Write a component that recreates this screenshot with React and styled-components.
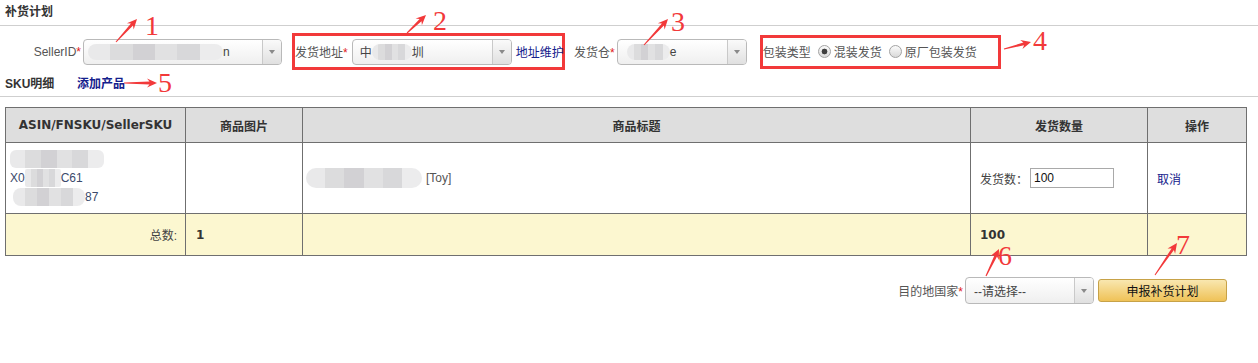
import React from 'react';
import styled, { createGlobalStyle } from 'styled-components';

const Global = createGlobalStyle`
  html, body { margin: 0; padding: 0; background: #fff; }
  body {
    font-family: "Liberation Sans", Arial, "Noto Sans CJK SC", sans-serif;
    font-size: 12px;
    color: #555;
  }
`;

const RED = '#f2393a';
const LINK = '#14208c';

const Page = styled.div`
  position: relative;
  width: 1258px;
  height: 363px;
  overflow: hidden;
`;

const TitleBar = styled.div`
  height: 25px;
  line-height: 25px;
  padding-left: 5px;
  border-bottom: 1px solid #cfcfcf;
  font-weight: bold;
  color: #333;
`;

const FilterRow = styled.div`
  display: flex;
  align-items: center;
  padding: 7px 0 0 29px;
`;

const Label = styled.span`
  display: inline-block;
  white-space: nowrap;
  color: #555;
  margin-right: ${p => p.$mr ?? 3}px;
  ${p => (p.$w ? `width:${p.$w}px; text-align:right;` : '')}
`;

const Star = styled.span`
  color: #e02020;
`;

const SelectBox = styled.div`
  display: flex;
  flex: none;
  box-sizing: border-box;
  width: ${p => p.$w}px;
  height: ${p => p.$h ?? 26}px;
  border: 1px solid #b9b9b9;
  border-radius: 4px;
  background: linear-gradient(#ffffff, #efefef);
  overflow: hidden;
`;

const SelectValue = styled.div`
  flex: 1;
  display: flex;
  align-items: center;
  padding-left: ${p => p.$pad ?? 7}px;
  color: #444;
  white-space: nowrap;
  overflow: hidden;
`;

const SelectArrow = styled.div`
  width: 18px;
  flex: none;
  border-left: 1px solid #c9c9c9;
  background: linear-gradient(#fafafa, #e0e0e0);
  display: flex;
  align-items: center;
  justify-content: center;
  &::after {
    content: "";
    border-left: 3.5px solid transparent;
    border-right: 3.5px solid transparent;
    border-top: 4px solid #8a8a8a;
  }
`;

const Mosaic = styled.span`
  display: inline-block;
  flex: none;
  width: ${p => p.$w}px;
  height: ${p => p.$h ?? 16}px;
  margin-left: ${p => p.$ml ?? 0}px;
  border-radius: ${p => p.$r ?? 8}px;
  background: linear-gradient(
    90deg,
    #e9e9ea 0 16%,
    #dcdcdd 16% 33%,
    #d2d1d4 33% 50%,
    #e1e1e2 50% 66%,
    #d8d8da 66% 83%,
    #ececed 83% 100%
  );
`;

const Highlight = styled.div`
  display: flex;
  align-items: center;
  box-sizing: border-box;
  height: ${p => p.$h}px;
  width: ${p => p.$w}px;
  margin-left: ${p => p.$ml}px;
  border: 3px solid ${RED};
  padding: 0 ${p => p.$pr ?? 0}px 0 0;
`;

const Link = styled.a`
  color: ${LINK};
  text-decoration: none;
  white-space: nowrap;
  font-weight: ${p => (p.$bold ? 'bold' : 'normal')};
  margin-left: ${p => p.$ml ?? 0}px;
  cursor: pointer;
`;

const Field = styled.div`
  display: flex;
  align-items: center;
  margin-left: ${p => p.$ml ?? 0}px;
`;

const RadioLabel = styled.label`
  display: inline-flex;
  align-items: center;
  margin-left: ${p => p.$ml}px;
  color: #555;
  white-space: nowrap;
`;

const Radio = styled.input.attrs({ type: 'radio' })`
  appearance: none;
  -webkit-appearance: none;
  width: 13px;
  height: 13px;
  margin: 0 3px 0 0;
  border-radius: 50%;
  border: 1px solid #a3a3a3;
  box-sizing: border-box;
  background: linear-gradient(#fbfbfb, #d9d9d9);
  &:checked {
    background: radial-gradient(circle, #3f3f3f 0 2.6px, transparent 3.2px),
      linear-gradient(#fbfbfb, #d9d9d9);
  }
`;

const SkuRow = styled.div`
  display: flex;
  align-items: center;
  margin-top: 2px;
  height: 20px;
  padding: 0 0 4px 5px;
  border-bottom: 1px solid #cfcfcf;
`;

const SkuTitle = styled.span`
  width: 72px;
  font-weight: bold;
  color: #333;
`;

const Table = styled.table`
  margin: 10px 0 0 5px;
  width: 1241px;
  border-collapse: collapse;
  table-layout: fixed;
`;

const Th = styled.th`
  height: 34px;
  padding: 0;
  border: 1px solid #6f6f6f;
  background: #dedede;
  color: #333;
  font-family: "DejaVu Sans", Verdana, "Noto Sans CJK SC", sans-serif;
  font-size: 12px;
  font-weight: bold;
  text-align: center;
`;

const Td = styled.td`
  height: ${p => p.$h}px;
  padding: 0 ${p => p.$pr ?? 9}px 0 ${p => p.$pl ?? 9}px;
  border: 1px solid #6f6f6f;
  background: ${p => (p.$foot ? '#fcf7d0' : '#fff')};
  text-align: ${p => p.$align ?? 'left'};
  color: #444;
  vertical-align: middle;
`;

const Strong = styled.span`
  font-family: "DejaVu Sans", Verdana, sans-serif;
  font-weight: bold;
  color: #333;
`;

const SkuStack = styled.div`
  display: flex;
  flex-direction: column;
  gap: 2px;
  margin-left: -5px;
`;

const SkuLine = styled.div`
  display: flex;
  align-items: center;
  height: 17px;
  color: #3b4a6b;
  font-size: 12px;
`;

const TitleCell = styled.div`
  display: flex;
  align-items: center;
  color: #555;
`;

const TitleText = styled.span`
  margin-left: 4px;
`;

const QtyCell = styled.div`
  display: flex;
  align-items: center;
  color: #444;
`;

const QtyInput = styled.input`
  width: 84px;
  height: 20px;
  box-sizing: border-box;
  margin-left: 2px;
  border: 1px solid #a9a9a9;
  padding: 0 3px;
  font-family: "Liberation Sans", Arial, sans-serif;
  font-size: 12px;
  color: #111;
  outline: none;
`;

const SubmitRow = styled.div`
  display: flex;
  justify-content: flex-end;
  align-items: center;
  margin-top: 21px;
  padding-right: 31px;
`;

const SubmitButton = styled.button`
  margin-left: 4px;
  width: 129px;
  height: 23px;
  box-sizing: border-box;
  border: 1px solid #c7a248;
  border-radius: 3px;
  background: linear-gradient(#f9e7b0, #efc257);
  font-family: "Liberation Sans", Arial, "Noto Sans CJK SC", sans-serif;
  font-size: 12px;
  color: #111;
  padding: 0;
  cursor: pointer;
`;

const Overlay = styled.svg`
  position: absolute;
  left: 0;
  top: 0;
  pointer-events: none;
`;

const Marker = styled.span`
  position: absolute;
  left: ${p => p.$x}px;
  top: ${p => p.$y}px;
  font-family: "Liberation Serif", "Times New Roman", serif;
  font-size: 28px;
  line-height: 1;
  color: ${RED};
  pointer-events: none;
`;

function arrowPoints(x1, y1, x2, y2) {
  const dx = x2 - x1;
  const dy = y2 - y1;
  const L = Math.hypot(dx, dy);
  const ux = dx / L;
  const uy = dy / L;
  const px = -uy;
  const py = ux;
  const hl = 10;
  const hw = 4.6;
  const sw = 1.4;
  const tw = 0.5;
  const jx = x2 - ux * (hl - 2.5);
  const jy = y2 - uy * (hl - 2.5);
  const bx = x2 - ux * hl;
  const by = y2 - uy * hl;
  const pts = [
    [x1 + px * tw, y1 + py * tw],
    [jx + px * sw, jy + py * sw],
    [bx + px * hw, by + py * hw],
    [x2, y2],
    [bx - px * hw, by - py * hw],
    [jx - px * sw, jy - py * sw],
    [x1 - px * tw, y1 - py * tw],
  ];
  return pts.map(p => `${p[0].toFixed(1)},${p[1].toFixed(1)}`).join(' ');
}

const arrows = [
  [116, 42, 137, 19],
  [407, 33, 426, 15],
  [644, 45, 668, 19],
  [1004, 49, 1031, 42],
  [124, 83, 157, 83],
  [986, 276, 999, 249],
  [1155, 275, 1177, 243],
];

const markers = [
  ['1', 145, 12],
  ['2', 433, 7],
  ['3', 671, 8],
  ['4', 1033, 27],
  ['5', 158, 69],
  ['6', 998, 242],
  ['7', 1176, 231],
];

export default function App() {
  return (
    <Page>
      <Global />
      <TitleBar>补货计划</TitleBar>

      <FilterRow>
        <Label $w={52} $mr={2}>
          SellerID<Star>*</Star>
        </Label>
        <SelectBox $w={199}>
          <SelectValue $pad={4}>
            <Mosaic $w={135} $h={16} />
            <span>n</span>
          </SelectValue>
          <SelectArrow />
        </SelectBox>

        <Highlight $w={273} $h={37} $ml={10}>
          <Label $mr={4}>
            发货地址<Star>*</Star>
          </Label>
          <SelectBox $w={160}>
            <SelectValue $pad={7}>
              <span>中</span>
              <Mosaic $w={40} $h={16} />
              <span>圳</span>
            </SelectValue>
            <SelectArrow />
          </SelectBox>
          <Link $ml={4}>地址维护</Link>
        </Highlight>

        <Field $ml={9}>
          <Label $mr={2}>
            发货仓<Star>*</Star>
          </Label>
          <SelectBox $w={130}>
            <SelectValue $pad={9}>
              <Mosaic $w={43} $h={16} />
              <span>e</span>
            </SelectValue>
            <SelectArrow />
          </SelectBox>
        </Field>

        <Highlight $w={241} $h={34} $ml={13}>
          <Label $mr={0}>包装类型</Label>
          <RadioLabel $ml={7}>
            <Radio name="pack" defaultChecked />
            混装发货
          </RadioLabel>
          <RadioLabel $ml={7}>
            <Radio name="pack" />
            原厂包装发货
          </RadioLabel>
        </Highlight>
      </FilterRow>

      <SkuRow>
        <SkuTitle>SKU明细</SkuTitle>
        <Link $bold>添加产品</Link>
      </SkuRow>

      <Table>
        <colgroup>
          <col style={{ width: 180 }} />
          <col style={{ width: 117 }} />
          <col style={{ width: 668 }} />
          <col style={{ width: 177 }} />
          <col style={{ width: 99 }} />
        </colgroup>
        <thead>
          <tr>
            <Th>ASIN/FNSKU/SellerSKU</Th>
            <Th>商品图片</Th>
            <Th>商品标题</Th>
            <Th>发货数量</Th>
            <Th>操作</Th>
          </tr>
        </thead>
        <tbody>
          <tr>
            <Td $h={70}>
              <SkuStack>
                <SkuLine>
                  <Mosaic $w={94} $h={18} $r={6} />
                </SkuLine>
                <SkuLine>
                  <span>X0</span>
                  <Mosaic $w={36} $h={18} $r={2} />
                  <span>C61</span>
                </SkuLine>
                <SkuLine>
                  <Mosaic $w={72} $h={18} $ml={3} $r={8} />
                  <span>87</span>
                </SkuLine>
              </SkuStack>
            </Td>
            <Td $h={70} />
            <Td $h={70} $pl={3}>
              <TitleCell>
                <Mosaic $w={116} $h={20} $r={10} />
                <TitleText>[Toy]</TitleText>
              </TitleCell>
            </Td>
            <Td $h={70}>
              <QtyCell>
                发货数：
                <QtyInput defaultValue="100" />
              </QtyCell>
            </Td>
            <Td $h={70}>
              <Link>取消</Link>
            </Td>
          </tr>
          <tr>
            <Td $foot $h={41} $align="right" $pr={8}>
              总数:
            </Td>
            <Td $foot $h={41} $pl={10}>
              <Strong>1</Strong>
            </Td>
            <Td $foot $h={41} />
            <Td $foot $h={41}>
              <Strong>100</Strong>
            </Td>
            <Td $foot $h={41} />
          </tr>
        </tbody>
      </Table>

      <SubmitRow>
        <Label $mr={2}>
          目的地国家<Star>*</Star>
        </Label>
        <SelectBox $w={129} $h={27}>
          <SelectValue $pad={8}>--请选择--</SelectValue>
          <SelectArrow />
        </SelectBox>
        <SubmitButton>申报补货计划</SubmitButton>
      </SubmitRow>

      <Overlay width="1258" height="363" viewBox="0 0 1258 363">
        {arrows.map((a, i) => (
          <polygon key={i} points={arrowPoints(...a)} fill={RED} />
        ))}
      </Overlay>
      {markers.map(([t, x, y]) => (
        <Marker key={t} $x={x} $y={y}>
          {t}
        </Marker>
      ))}
    </Page>
  );
}
